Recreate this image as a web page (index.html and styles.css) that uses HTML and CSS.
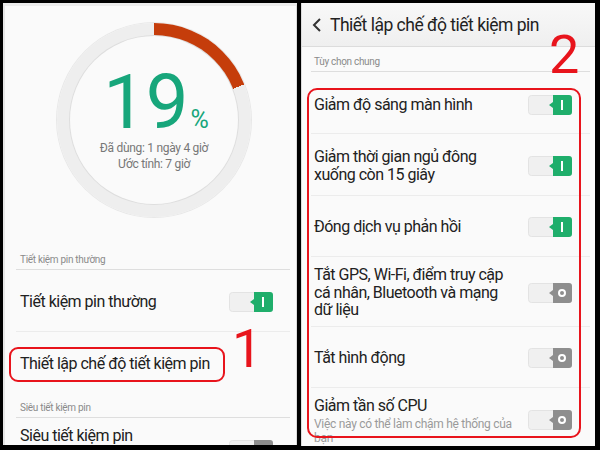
FILE: index.html
```html
<!DOCTYPE html>
<html lang="vi">
<head>
<meta charset="utf-8">
<title>Tiết kiệm pin</title>
<link rel="stylesheet" href="styles.css">
</head>
<body>
<div class="screen">
  <section class="panel left">
    <div class="gauge">
      <div class="ring">
        <div class="ring-inner">
          <div class="pct"><span class="num">19</span><span class="sign">%</span></div>
          <div class="info">Đã dùng: 1 ngày 4 giờ</div>
          <div class="info">Ước tính: 7 giờ</div>
        </div>
      </div>
    </div>

    <div class="sec sec-a">Tiết kiệm pin thường</div>
    <div class="row row-a">
      <span class="label">Tiết kiệm pin thường</span>
      <svg class="tg" viewBox="0 0 44 20" width="44" height="20"><rect x="0.5" y="0.5" width="43" height="19" rx="3" fill="#f0f0f0" stroke="#e3e3e3"/><path d="M25 0 H41 a3 3 0 0 1 3 3 V17 a3 3 0 0 1 -3 3 H25 V13 L21 10 L25 7 Z" fill="#1fae6b"/><rect x="33" y="5" width="2" height="10" fill="#fff"/></svg>
    </div>
    <div class="row row-b">
      <span class="label boxed">Thiết lập chế độ tiết kiệm pin</span>
    </div>
    <div class="sec sec-b">Siêu tiết kiệm pin</div>
    <div class="row row-c">
      <span class="label">Siêu tiết kiệm pin</span>
      <svg class="tg tg-c" viewBox="0 0 44 20" width="44" height="20"><rect x="0.5" y="0.5" width="43" height="19" rx="3" fill="#f0f0f0" stroke="#e3e3e3"/><path d="M25 0 H41 a3 3 0 0 1 3 3 V17 a3 3 0 0 1 -3 3 H25 V13 L21 10 L25 7 Z" fill="#8e8e8e"/><circle cx="34" cy="10" r="3" fill="none" stroke="#fff" stroke-width="2"/></svg>
    </div>
    <span class="mark mark-1">1</span>
  </section>

  <section class="panel right">
    <header class="bar">
      <svg class="back" viewBox="0 0 10 14" width="10" height="14"><polyline points="8,1 2,7 8,13" fill="none" stroke="#333" stroke-width="2"/></svg>
      <span class="title">Thiết lập chế độ tiết kiệm pin</span>
    </header>
    <div class="rsec">Tùy chọn chung</div>

    <div class="item i1">
      <span class="label">Giảm độ sáng màn hình</span>
      <svg class="tg" viewBox="0 0 44 20" width="44" height="20"><rect x="0.5" y="0.5" width="43" height="19" rx="3" fill="#f0f0f0" stroke="#e3e3e3"/><path d="M25 0 H41 a3 3 0 0 1 3 3 V17 a3 3 0 0 1 -3 3 H25 V13 L21 10 L25 7 Z" fill="#1fae6b"/><rect x="33" y="5" width="2" height="10" fill="#fff"/></svg>
    </div>
    <div class="item i2">
      <span class="label">Giảm thời gian ngủ đông<br>xuống còn 15 giây</span>
      <svg class="tg" viewBox="0 0 44 20" width="44" height="20"><rect x="0.5" y="0.5" width="43" height="19" rx="3" fill="#f0f0f0" stroke="#e3e3e3"/><path d="M25 0 H41 a3 3 0 0 1 3 3 V17 a3 3 0 0 1 -3 3 H25 V13 L21 10 L25 7 Z" fill="#1fae6b"/><rect x="33" y="5" width="2" height="10" fill="#fff"/></svg>
    </div>
    <div class="item i3">
      <span class="label">Đóng dịch vụ phản hồi</span>
      <svg class="tg" viewBox="0 0 44 20" width="44" height="20"><rect x="0.5" y="0.5" width="43" height="19" rx="3" fill="#f0f0f0" stroke="#e3e3e3"/><path d="M25 0 H41 a3 3 0 0 1 3 3 V17 a3 3 0 0 1 -3 3 H25 V13 L21 10 L25 7 Z" fill="#1fae6b"/><rect x="33" y="5" width="2" height="10" fill="#fff"/></svg>
    </div>
    <div class="item i4">
      <span class="label">Tắt GPS, Wi-Fi, điểm truy cập<br>cá nhân, Bluetooth và mạng<br>dữ liệu</span>
      <svg class="tg" viewBox="0 0 44 20" width="44" height="20"><rect x="0.5" y="0.5" width="43" height="19" rx="3" fill="#f0f0f0" stroke="#e3e3e3"/><path d="M25 0 H41 a3 3 0 0 1 3 3 V17 a3 3 0 0 1 -3 3 H25 V13 L21 10 L25 7 Z" fill="#8e8e8e"/><circle cx="34" cy="10" r="3" fill="none" stroke="#fff" stroke-width="2"/></svg>
    </div>
    <div class="item i5">
      <span class="label">Tắt hình động</span>
      <svg class="tg" viewBox="0 0 44 20" width="44" height="20"><rect x="0.5" y="0.5" width="43" height="19" rx="3" fill="#f0f0f0" stroke="#e3e3e3"/><path d="M25 0 H41 a3 3 0 0 1 3 3 V17 a3 3 0 0 1 -3 3 H25 V13 L21 10 L25 7 Z" fill="#8e8e8e"/><circle cx="34" cy="10" r="3" fill="none" stroke="#fff" stroke-width="2"/></svg>
    </div>
    <div class="item i6">
      <div class="texts">
        <span class="label">Giảm tần số CPU</span>
        <span class="sub">Việc này có thể làm chậm hệ thống của<br>bạn</span>
      </div>
      <svg class="tg tg-6" viewBox="0 0 44 20" width="44" height="20"><rect x="0.5" y="0.5" width="43" height="19" rx="3" fill="#f0f0f0" stroke="#e3e3e3"/><path d="M25 0 H41 a3 3 0 0 1 3 3 V17 a3 3 0 0 1 -3 3 H25 V13 L21 10 L25 7 Z" fill="#8e8e8e"/><circle cx="34" cy="10" r="3" fill="none" stroke="#fff" stroke-width="2"/></svg>
    </div>

    <div class="redbox"></div>
    <span class="mark mark-2">2</span>
  </section>
</div>
</body>
</html>
```

FILE: styles.css
```css
* { box-sizing: border-box; }
html, body { margin: 0; padding: 0; }
body {
  width: 600px;
  height: 450px;
  overflow: hidden;
  background: #000;
  font-family: Roboto, "Noto Sans", "Liberation Sans", sans-serif;
  color: #212121;
}
.screen {
  display: flex;
  gap: 4px;
  padding: 3px 0 0 3px;
}
.panel {
  position: relative;
  overflow: hidden;
  width: 294px;
  background: #fafafa;
}
.left {
  height: 442px;
  border-top: 3px solid #ececec;
  border-left: 2px solid #e6e6e6;
  border-right: 1px solid #dcdcdc;
}
.right {
  height: 443px;
  border-left: 1px solid #dcdcdc;
}

/* gauge */
.gauge {
  padding: 17px 0 0 52px;
}
.ring {
  width: 194px;
  height: 194px;
  border-radius: 50%;
  background: conic-gradient(#c53d0b 0 19%, #eeeeee 19% 100%);
  box-shadow: 0 0 0 1px #e8e8e8;
  display: flex;
  align-items: center;
  justify-content: center;
}
.ring-inner {
  width: 168px;
  height: 168px;
  border-radius: 50%;
  background: #fafafa;
  box-shadow: 0 0 0 1px #dedede;
  display: flex;
  flex-direction: column;
  align-items: center;
  padding-top: 28px;
}
.pct {
  display: flex;
  align-items: baseline;
  color: #17a67b;
  height: 76px;
  padding: 3px 0 0 4px;
}
.num {
  display: inline-block;
  font-size: 76px;
  line-height: 70px;
  height: 70px;
  font-weight: 400;
}
.sign {
  display: inline-block;
  font-size: 25px;
  line-height: 25px;
  margin-left: 2px;
}
.info {
  font-size: 12px;
  letter-spacing: -0.3px;
  line-height: 16px;
  color: #777;
}

/* left list */
.sec {
  font-size: 10px;
  letter-spacing: -0.3px;
  line-height: 14px;
  color: #8a8a8a;
  margin: 0 6px 0 11px;
  padding: 0 0 2px 4px;
  border-bottom: 1px solid #dedede;
}
.sec-a { margin-top: 36px; }
.sec-b { margin-top: 5px; }
.row {
  display: flex;
  align-items: center;
  justify-content: space-between;
  margin: 0 6px 0 11px;
  padding: 0 17px 0 4px;
}
.label {
  font-size: 16px;
  letter-spacing: -0.5px;
  line-height: 20px;
  color: #212121;
}
.row-a {
  height: 62px;
  padding-top: 3px;
  border-bottom: 1px solid #ececec;
}
.row-b {
  height: 64px;
  padding-left: 0;
  margin-left: 4px;
}
.boxed {
  border: 2px solid #e8141c;
  border-radius: 9px;
  padding: 5px 13px 6px 9px;
}
.row-c {
  height: 60px;
  align-items: flex-start;
  padding-top: 8px;
}
.tg { display: block; flex: none; }
.tg-c { margin-top: 14px; }

.mark {
  position: absolute;
  font-size: 54px;
  line-height: 54px;
  font-weight: 400;
  color: #e8141c;
}
.mark-1 { left: 227px; top: 316px; }
.mark-2 { left: 247px; top: 25px; }

/* right panel */
.bar {
  height: 44px;
  display: flex;
  align-items: center;
  padding-left: 10px;
  background: linear-gradient(#f8f8f8, #efefef);
  border-bottom: 1px solid #dcdcdc;
}
.back { display: block; }
.title {
  margin-left: 8px;
  font-size: 17.5px;
  letter-spacing: -0.5px;
  color: #222;
}
.rsec {
  font-size: 10px;
  letter-spacing: -0.3px;
  line-height: 14px;
  color: #8a8a8a;
  margin: 8px 5px 0 9px;
  padding: 0 0 2px 3px;
  border-bottom: 1px solid #dedede;
}
.item {
  display: flex;
  align-items: center;
  justify-content: space-between;
  margin: 0 5px 0 9px;
  padding: 2px 18px 0 3px;
  border-bottom: 1px solid #ececec;
}
.item .label {
  font-size: 16px;
  line-height: 17.5px;
}
.i1 { height: 62px; padding-top: 4px; }
.i2 { height: 62px; }
.i3 { height: 61px; }
.i4 { height: 70px; }
.i5 { height: 61px; }
.i6 {
  border-bottom: none;
  align-items: flex-start;
  padding-top: 9px;
}
.texts {
  display: flex;
  flex-direction: column;
  flex: 1;
}
.i6 .label { line-height: 18px; }
.sub {
  font-size: 12px;
  letter-spacing: -0.3px;
  line-height: 13.5px;
  color: #9a9a9a;
  margin-top: 3px;
  white-space: nowrap;
}
.tg-6 { margin-top: 13px; }

.redbox {
  position: absolute;
  left: 5px;
  top: 85px;
  width: 274px;
  height: 350px;
  border: 2.5px solid #e8141c;
  border-radius: 10px;
}
```
